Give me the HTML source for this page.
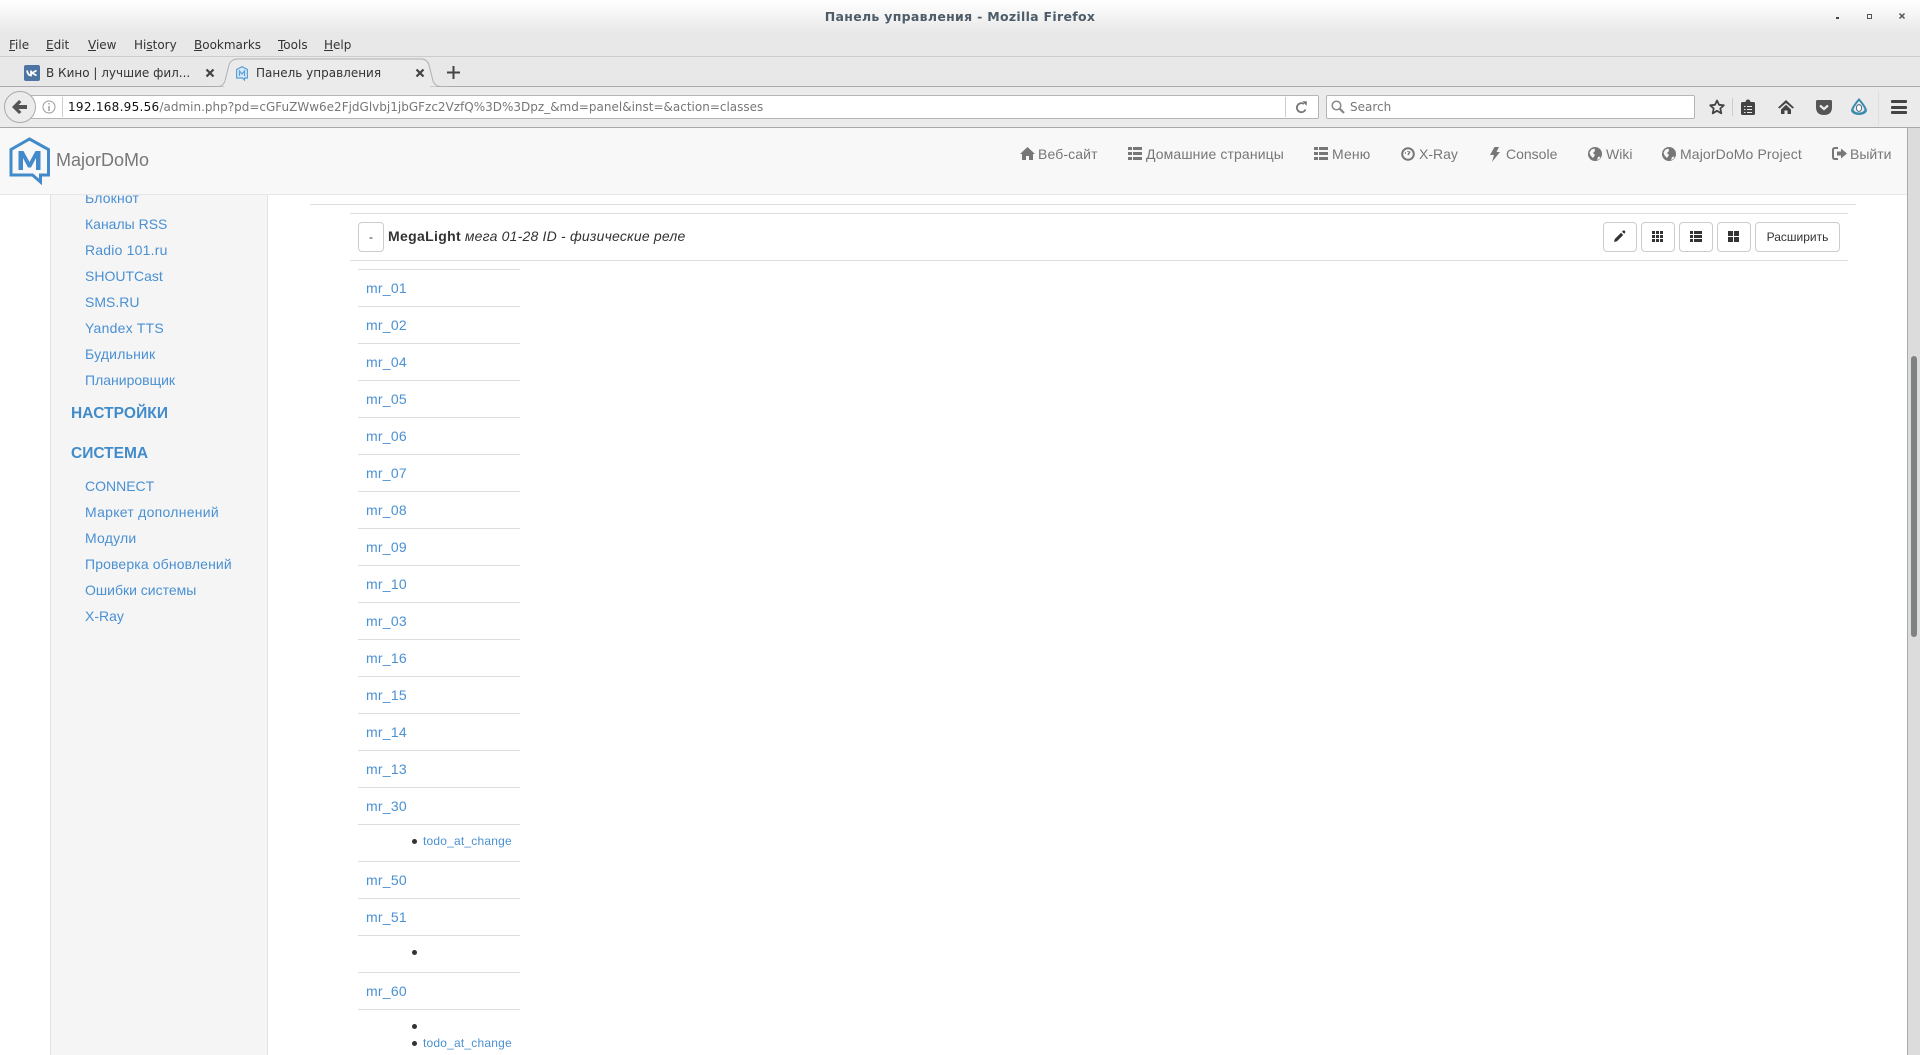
<!DOCTYPE html>
<html lang="ru"><head><meta charset="utf-8"><title>Панель управления - Mozilla Firefox</title>
<style>
html,body{margin:0;padding:0;width:1920px;height:1055px;overflow:hidden;background:#fff}
body{position:relative;font-family:"Liberation Sans",sans-serif;font-size:14px}
.a{position:absolute;white-space:nowrap}
.d{font-family:"DejaVu Sans",sans-serif}
svg{position:absolute;overflow:visible}
u{text-decoration:underline}
.n{color:#777;font-size:14px;line-height:20px;top:144px;letter-spacing:.12px}
.s{color:#4a90d2;font-size:14px;line-height:20px;left:85px}
.h{color:#428bca;font-size:15.5px;font-weight:bold;line-height:20px;left:71px}
.l{position:absolute;background:#ddd;height:1px}
.m{color:#4a90d2;font-size:14px;line-height:20px;left:366px;letter-spacing:.24px}
.t{color:#4a90d2;font-size:12px;line-height:17px;left:423px;letter-spacing:.2px}
.b{position:absolute;width:5px;height:5px;border-radius:50%;background:#333;left:412px}
.btn{position:absolute;top:222px;height:28px;border:1px solid #ccc;border-radius:4px;background:#fff;box-sizing:content-box}
</style></head><body>

<!-- page -->
<div class="a" style="left:50px;top:190px;width:216px;height:865px;background:#f5f5f5;border-left:1px solid #e3e3e3;border-right:1px solid #e3e3e3"></div>
<div class="a s" style="top:188px;letter-spacing:.17px">Блокнот</div>
<div class="a s" style="top:214px">Каналы RSS</div>
<div class="a s" style="top:240px;letter-spacing:.2px">Radio 101.ru</div>
<div class="a s" style="top:266px">SHOUTCast</div>
<div class="a s" style="top:292px">SMS.RU</div>
<div class="a s" style="top:318px;letter-spacing:.24px">Yandex TTS</div>
<div class="a s" style="top:344px;letter-spacing:.2px">Будильник</div>
<div class="a s" style="top:370px">Планировщик</div>
<div class="a h" style="top:404px;letter-spacing:.1px">НАСТРОЙКИ</div>
<div class="a h" style="top:444px">СИСТЕМА</div>
<div class="a s" style="top:476px">CONNECT</div>
<div class="a s" style="top:502px;letter-spacing:.27px">Маркет дополнений</div>
<div class="a s" style="top:528px;letter-spacing:.2px">Модули</div>
<div class="a s" style="top:554px;letter-spacing:.13px">Проверка обновлений</div>
<div class="a s" style="top:580px">Ошибки системы</div>
<div class="a s" style="top:606px">X-Ray</div>

<div class="l" style="left:310px;top:204px;width:1546px"></div>
<div class="l" style="left:350px;top:213px;width:1498px"></div>
<div class="l" style="left:350px;top:260px;width:1498px"></div>

<div class="btn" style="left:358px;width:24px;color:#333;font-size:12px;text-align:center;line-height:28px">-</div>
<div class="a" style="left:388px;top:225.500px;line-height:20px;color:#333"><b style="letter-spacing:.33px">MegaLight</b> <i style="letter-spacing:.2px">мега 01-28 ID - физические реле</i></div>

<div class="btn" style="left:1603px;width:32px"><svg style="left:10px;top:7px" width="12" height="12" viewBox="0 0 12 12"><path fill="#333" d="M0 12l.8-3 6.200-6.200 2.200 2.200L3 11.200zM8 1.800l1-1q1-.8 1.800 0t.4 1.800l-1 1.200z"/></svg></div>
<div class="btn" style="left:1641px;width:32px"><svg style="left:10px;top:8px" width="11" height="11" viewBox="0 0 11 11"><path fill="#333" d="M0 0h3v3H0zM4 0h3v3H4zM8 0h3v3H8zM0 4h3v3H0zM4 4h3v3H4zM8 4h3v3H8zM0 8h3v3H0zM4 8h3v3H4zM8 8h3v3H8z"/></svg></div>
<div class="btn" style="left:1679px;width:32px"><svg style="left:10px;top:8px" width="12" height="11" viewBox="0 0 12 11"><path fill="#333" d="M0 0h3v3H0zM4 0h8v3H4zM0 4h3v3H0zM4 4h8v3H4zM0 8h3v3H0zM4 8h8v3H4z"/></svg></div>
<div class="btn" style="left:1717px;width:32px"><svg style="left:10px;top:8px" width="11" height="11" viewBox="0 0 11 11"><path fill="#333" d="M0 0h5v5H0zM6 0h5v5H6zM0 6h5v5H0zM6 6h5v5H6z"/></svg></div>
<div class="btn" style="left:1755px;width:83px;color:#333;font-size:12px;text-align:center;line-height:28px">Расширить</div>

<div class="l" style="left:358px;top:269px;width:162px"></div>
<div class="l" style="left:358px;top:306px;width:162px"></div>
<div class="l" style="left:358px;top:343px;width:162px"></div>
<div class="l" style="left:358px;top:380px;width:162px"></div>
<div class="l" style="left:358px;top:417px;width:162px"></div>
<div class="l" style="left:358px;top:454px;width:162px"></div>
<div class="l" style="left:358px;top:491px;width:162px"></div>
<div class="l" style="left:358px;top:528px;width:162px"></div>
<div class="l" style="left:358px;top:565px;width:162px"></div>
<div class="l" style="left:358px;top:602px;width:162px"></div>
<div class="l" style="left:358px;top:639px;width:162px"></div>
<div class="l" style="left:358px;top:676px;width:162px"></div>
<div class="l" style="left:358px;top:713px;width:162px"></div>
<div class="l" style="left:358px;top:750px;width:162px"></div>
<div class="l" style="left:358px;top:787px;width:162px"></div>
<div class="l" style="left:358px;top:824px;width:162px"></div>
<div class="l" style="left:358px;top:861px;width:162px"></div>
<div class="l" style="left:358px;top:898px;width:162px"></div>
<div class="l" style="left:358px;top:935px;width:162px"></div>
<div class="l" style="left:358px;top:972px;width:162px"></div>
<div class="l" style="left:358px;top:1009px;width:162px"></div>

<div class="a m" style="top:278px">mr_01</div>
<div class="a m" style="top:315px">mr_02</div>
<div class="a m" style="top:352px">mr_04</div>
<div class="a m" style="top:389px">mr_05</div>
<div class="a m" style="top:426px">mr_06</div>
<div class="a m" style="top:463px">mr_07</div>
<div class="a m" style="top:500px">mr_08</div>
<div class="a m" style="top:537px">mr_09</div>
<div class="a m" style="top:574px">mr_10</div>
<div class="a m" style="top:611px">mr_03</div>
<div class="a m" style="top:648px">mr_16</div>
<div class="a m" style="top:685px">mr_15</div>
<div class="a m" style="top:722px">mr_14</div>
<div class="a m" style="top:759px">mr_13</div>
<div class="a m" style="top:796px">mr_30</div>
<div class="b" style="top:839px"></div><div class="a t" style="top:833px">todo_at_change</div>
<div class="a m" style="top:870px">mr_50</div>
<div class="a m" style="top:907px">mr_51</div>
<div class="b" style="top:950px"></div>
<div class="a m" style="top:981px">mr_60</div>
<div class="b" style="top:1024px"></div>
<div class="b" style="top:1041px"></div><div class="a t" style="top:1035px">todo_at_change</div>

<!-- site navbar -->
<div class="a" style="left:0;top:128px;width:1920px;height:66px;background:#f8f8f8;border-bottom:1px solid #e7e7e7"></div>
<svg style="left:9px;top:137px" width="42" height="48" viewBox="0 0 42 48"><path fill="none" stroke="#428bca" stroke-width="3" d="M2 12.500 20.500 2 39.500 12.500V38H31.500V45L23.500 38H2Z" stroke-linejoin="miter"/><path fill="#428bca" d="M9.500 33V14h5l6 11 6-11h5v19h-4.500V21l-5 9.500h-3l-5-9.500v12z"/></svg>
<div class="a" style="left:56px;top:149px;font-size:18px;line-height:22px;color:#777">MajorDoMo</div>

<svg style="left:1020px;top:147px" width="15" height="13" viewBox="0 0 15 13"><path fill="#777" d="M7.500 0 15 7h-2v6H9V9H6v4H2V7H0z"/></svg>
<div class="a n" style="left:1038px">Веб-сайт</div>
<svg style="left:1128px;top:147px" width="14" height="13" viewBox="0 0 14 13"><path fill="#777" d="M0 0h4v3H0zM5 0h9v3H5zM0 5h4v3H0zM5 5h9v3H5zM0 10h4v3H0zM5 10h9v3H5z"/></svg>
<div class="a n" style="left:1146px">Домашние страницы</div>
<svg style="left:1314px;top:147px" width="14" height="13" viewBox="0 0 14 13"><path fill="#777" d="M0 0h4v3H0zM5 0h9v3H5zM0 5h4v3H0zM5 5h9v3H5zM0 10h4v3H0zM5 10h9v3H5z"/></svg>
<div class="a n" style="left:1332px">Меню</div>
<svg style="left:1401px;top:147px" width="14" height="14" viewBox="0 0 14 14"><circle cx="7" cy="7" r="5.800" fill="none" stroke="#777" stroke-width="2"/><path stroke="#777" stroke-width="1.500" d="M7 8 9 4.500M4 6h1M7 4v1"/></svg>
<div class="a n" style="left:1419px;letter-spacing:0">X-Ray</div>
<svg style="left:1490px;top:147px" width="10" height="15" viewBox="0 0 10 15"><path fill="#777" d="M4.500 0H9L6.500 5H10L2 15 4 8H0z"/></svg>
<div class="a n" style="left:1506px;letter-spacing:0">Console</div>
<svg style="left:1588px;top:147px" width="14" height="14" viewBox="0 0 14 14"><circle cx="7" cy="7" r="7" fill="#777"/><path fill="#f8f8f8" d="M1.500 5.500 3.500 2.500 6.500 1.500 7 4 5 6 7 8 5 11 2.500 8.500zM9 13l1-3 2.500-.500-1 2.500z"/></svg>
<div class="a n" style="left:1606px;letter-spacing:0">Wiki</div>
<svg style="left:1662px;top:147px" width="14" height="14" viewBox="0 0 14 14"><circle cx="7" cy="7" r="7" fill="#777"/><path fill="#f8f8f8" d="M1.500 5.500 3.500 2.500 6.500 1.500 7 4 5 6 7 8 5 11 2.500 8.500zM9 13l1-3 2.500-.500-1 2.500z"/></svg>
<div class="a n" style="left:1680px">MajorDoMo Project</div>
<svg style="left:1832px;top:147px" width="15" height="13" viewBox="0 0 15 13"><path fill="none" stroke="#777" stroke-width="2" d="M6 1H3Q1 1 1 3v7q0 2 2 2h3"/><path fill="#777" d="M5 4.500h4V1.500L15 6.500 9 11.500V8.500H5z"/></svg>
<div class="a n" style="left:1850px;letter-spacing:0">Выйти</div>

<!-- scrollbar -->
<div class="a" style="left:1907px;top:128px;width:13px;height:927px;background:#dcdcdc;border-left:1px solid #aaa;box-sizing:border-box"></div>
<div class="a" style="left:1911px;top:356px;width:6px;height:281px;background:#7e8382;border-radius:3px"></div>

<!-- browser chrome -->
<div class="a" style="left:0;top:0;width:1920px;height:33px;background:linear-gradient(#fff,#e8e8e8)"></div>
<div class="a" style="left:0;top:33px;width:1920px;height:23px;background:#e8e8e8"></div>
<div class="a d" style="left:0;width:1920px;top:8.500px;text-align:center;font-size:12.5px;font-weight:bold;line-height:16px;color:#4d5c69;letter-spacing:.3px">Панель управления - Mozilla Firefox</div>
<div class="a" style="left:1836px;top:17px;width:3px;height:2px;background:#444"></div>
<div class="a" style="left:1867px;top:14px;width:5px;height:5px;border:1.500px solid #555;box-sizing:border-box"></div>
<svg style="left:1899px;top:13px" width="6" height="6" viewBox="0 0 6 6"><path stroke="#555" stroke-width="1.500" d="M.5.500 5.500 5.500M5.500.500.500 5.500"/></svg>

<div class="a d" style="left:9px;top:37px;font-size:12px;line-height:16px;color:#333"><u>F</u>ile</div>
<div class="a d" style="left:46px;top:37px;font-size:12px;line-height:16px;color:#333"><u>E</u>dit</div>
<div class="a d" style="left:88px;top:37px;font-size:12px;line-height:16px;color:#333"><u>V</u>iew</div>
<div class="a d" style="left:134px;top:37px;font-size:12px;line-height:16px;color:#333">Hi<u>s</u>tory</div>
<div class="a d" style="left:194px;top:37px;font-size:12px;line-height:16px;color:#333"><u>B</u>ookmarks</div>
<div class="a d" style="left:278px;top:37px;font-size:12px;line-height:16px;color:#333"><u>T</u>ools</div>
<div class="a d" style="left:324px;top:37px;font-size:12px;line-height:16px;color:#333"><u>H</u>elp</div>

<div class="a" style="left:0;top:56px;width:1920px;height:1px;background:#ccc"></div>
<div class="a" style="left:0;top:57px;width:1920px;height:29px;background:#e8e8e8"></div>
<div class="a" style="left:0;top:86px;width:1920px;height:1px;background:#aaa"></div>
<div class="a" style="left:0;top:87px;width:1920px;height:40px;background:#ebebeb"></div>
<div class="a" style="left:0;top:127px;width:1920px;height:1px;background:#a8a8a8"></div>

<!-- tabs -->
<svg style="left:215px;top:57px" width="235" height="31" viewBox="0 0 235 31"><path fill="#ebebeb" stroke="#aeb0b2" stroke-width="1" d="M0 29.500H3Q8 29.500 10 24L14 8Q16 2 23 2H206Q212 2 214 8L218 24Q220 29.500 226 29.500H235"/></svg>
<div class="a" style="left:224px;top:86px;width:206px;height:1px;background:#ebebeb"></div>
<svg style="left:24px;top:65px" width="16" height="16" viewBox="0 0 16 16"><rect width="16" height="16" rx="2" fill="#4c75a3"/><path fill="none" stroke="#fff" stroke-width="1.800" d="M3 5.500c.5 3 2 5 4 5V5.500M12.500 5.500 8 8l4.500 2.500"/></svg>
<div class="a d" style="left:46px;top:64px;font-size:12px;line-height:18px;color:#333">В Кино | лучшие фил...</div>
<svg style="left:206px;top:69px" width="8" height="8" viewBox="0 0 8 8"><path stroke="#444" stroke-width="2.200" d="M.5.500 7.500 7.500M7.500.500.500 7.500"/></svg>
<svg style="left:236px;top:66px" width="12" height="15" viewBox="0 0 12 15"><path fill="#d8e8f6" stroke="#5b9fd8" stroke-width="1.200" d="M.6 3.500 6 .7l5.400 2.800v8.500H8.500v2L6.500 12H.6z"/><path fill="none" stroke="#5b9fd8" stroke-width="1.200" d="M3.500 10V5L6 8l2.500-3v5"/></svg>
<div class="a d" style="left:256px;top:64px;font-size:12px;line-height:18px;color:#333">Панель управления</div>
<svg style="left:416px;top:69px" width="8" height="8" viewBox="0 0 8 8"><path stroke="#444" stroke-width="2.200" d="M.5.500 7.500 7.500M7.500.500.500 7.500"/></svg>
<svg style="left:447px;top:66px" width="13" height="13" viewBox="0 0 13 13"><path fill="#444" d="M5.500 0h2v5.500H13v2H7.500V13h-2V7.500H0v-2h5.500z"/></svg>

<!-- url bar -->
<div class="a" style="left:30px;top:95px;width:1289px;height:24px;background:#fff;border:1px solid #b5b5b5;border-radius:2px;box-sizing:border-box"></div>
<div class="a" style="left:4px;top:91px;width:32px;height:32px;border-radius:50%;background:#ececec;border:1px solid #aaa;box-sizing:border-box"></div>
<svg style="left:12px;top:100px" width="15" height="14" viewBox="0 0 15 14"><path fill="#555" d="M7 0 9.500 2 6.500 5H15v4H6.500l3 3L7 14 0 7z"/></svg>
<svg style="left:42px;top:100px" width="14" height="14" viewBox="0 0 14 14"><circle cx="7" cy="7" r="6" fill="none" stroke="#999"/><path fill="#999" d="M6.300 3h1.400v1.500H6.300zM6.300 6h1.400v5H6.300z"/></svg>
<div class="a" style="left:62px;top:97px;width:1px;height:20px;background:#ccc"></div>
<div class="a d" style="left:68px;top:98px;font-size:12px;line-height:18px;color:#777"><span style="color:#111;letter-spacing:.28px">192.168.95.56</span>/admin.php?pd=cGFuZWw6e2FjdGlvbj1jbGFzc2VzfQ%3D%3Dpz_&amp;md=panel&amp;inst=&amp;action=classes</div>
<div class="a" style="left:1285px;top:97px;width:1px;height:20px;background:#ccc"></div>
<svg style="left:1295px;top:101px" width="13" height="13" viewBox="0 0 13 13"><path fill="none" stroke="#777" stroke-width="1.800" d="M10.500 8.500A4.500 4.500 0 1 1 9 3"/><path fill="#777" d="M7.500 0 12 .5 11.500 5z"/></svg>

<div class="a" style="left:1326px;top:95px;width:369px;height:24px;background:#fff;border:1px solid #b5b5b5;border-radius:2px;box-sizing:border-box"></div>
<svg style="left:1331px;top:100px" width="14" height="14" viewBox="0 0 14 14"><circle cx="5.500" cy="5.500" r="4.300" fill="none" stroke="#888" stroke-width="1.500"/><path stroke="#888" stroke-width="2.200" d="M8.800 8.800 13 13"/></svg>
<div class="a d" style="left:1350px;top:98px;font-size:12px;line-height:18px;color:#777">Search</div>

<svg style="left:1709px;top:99px" width="16" height="16" viewBox="0 0 16 16"><path fill="none" stroke="#444" stroke-width="1.800" stroke-linejoin="round" d="M8 1.500 10 5.800 14.800 6.300 11.300 9.500 12.300 14.300 8 11.800 3.700 14.300 4.700 9.500 1.200 6.300 6 5.800z"/></svg>
<div class="a" style="left:1732px;top:98px;width:1px;height:18px;background:#ccc"></div>
<svg style="left:1741px;top:99px" width="14" height="16" viewBox="0 0 14 16"><path fill="#444" d="M1.500 3H4.500Q5 .5 7 .5T9.500 3h3Q14 3 14 4.500v10Q14 16 12.500 16h-11Q0 16 0 14.500v-10Q0 3 1.500 3z"/><path stroke="#ebebeb" d="M3 7.500h1.500M6 7.500h5M3 10.500h1.500M6 10.500h5M3 13.500h1.500M6 13.500h5"/></svg>
<svg style="left:1778px;top:100px" width="16" height="14" viewBox="0 0 16 14"><path fill="#444" d="M8 0 16 7.500 14.500 8.500 8 3 1.500 8.500 0 7.500zM3 9.500 8 4.800l5 4.700V14h-3.500V10.500h-3V14H3z"/></svg>
<svg style="left:1816px;top:100px" width="16" height="15" viewBox="0 0 16 15"><path fill="#555" d="M1.500 0h13Q16 0 16 1.500V7Q16 15 8 15T0 7V1.500Q0 0 1.500 0z"/><path fill="none" stroke="#ebebeb" stroke-width="2.200" d="M4 5.500 8 9l4-3.500"/></svg>
<svg style="left:1851px;top:98px" width="16" height="17" viewBox="0 0 16 17"><path fill="#3b8ab0" d="M8 0Q16 9 16 13 14 17 8 17T0 13Q0 9 8 0z"/><path fill="#ebebeb" d="M8 3Q13.500 9.500 13.500 12 12 14.500 8 14.500T2.500 12Q2.500 9.500 8 3z"/><ellipse cx="8" cy="10" rx="2.600" ry="3.400" fill="#fff" stroke="#4a6a80" stroke-width="1"/></svg>
<div class="a" style="left:1878px;top:91px;width:1px;height:34px;background:#ddd"></div>
<div class="a" style="left:1891px;top:100px;width:16px;height:3px;border-radius:1px;background:#444"></div>
<div class="a" style="left:1891px;top:105.500px;width:16px;height:3px;border-radius:1px;background:#444"></div>
<div class="a" style="left:1891px;top:111px;width:16px;height:3px;border-radius:1px;background:#444"></div>
</body></html>
